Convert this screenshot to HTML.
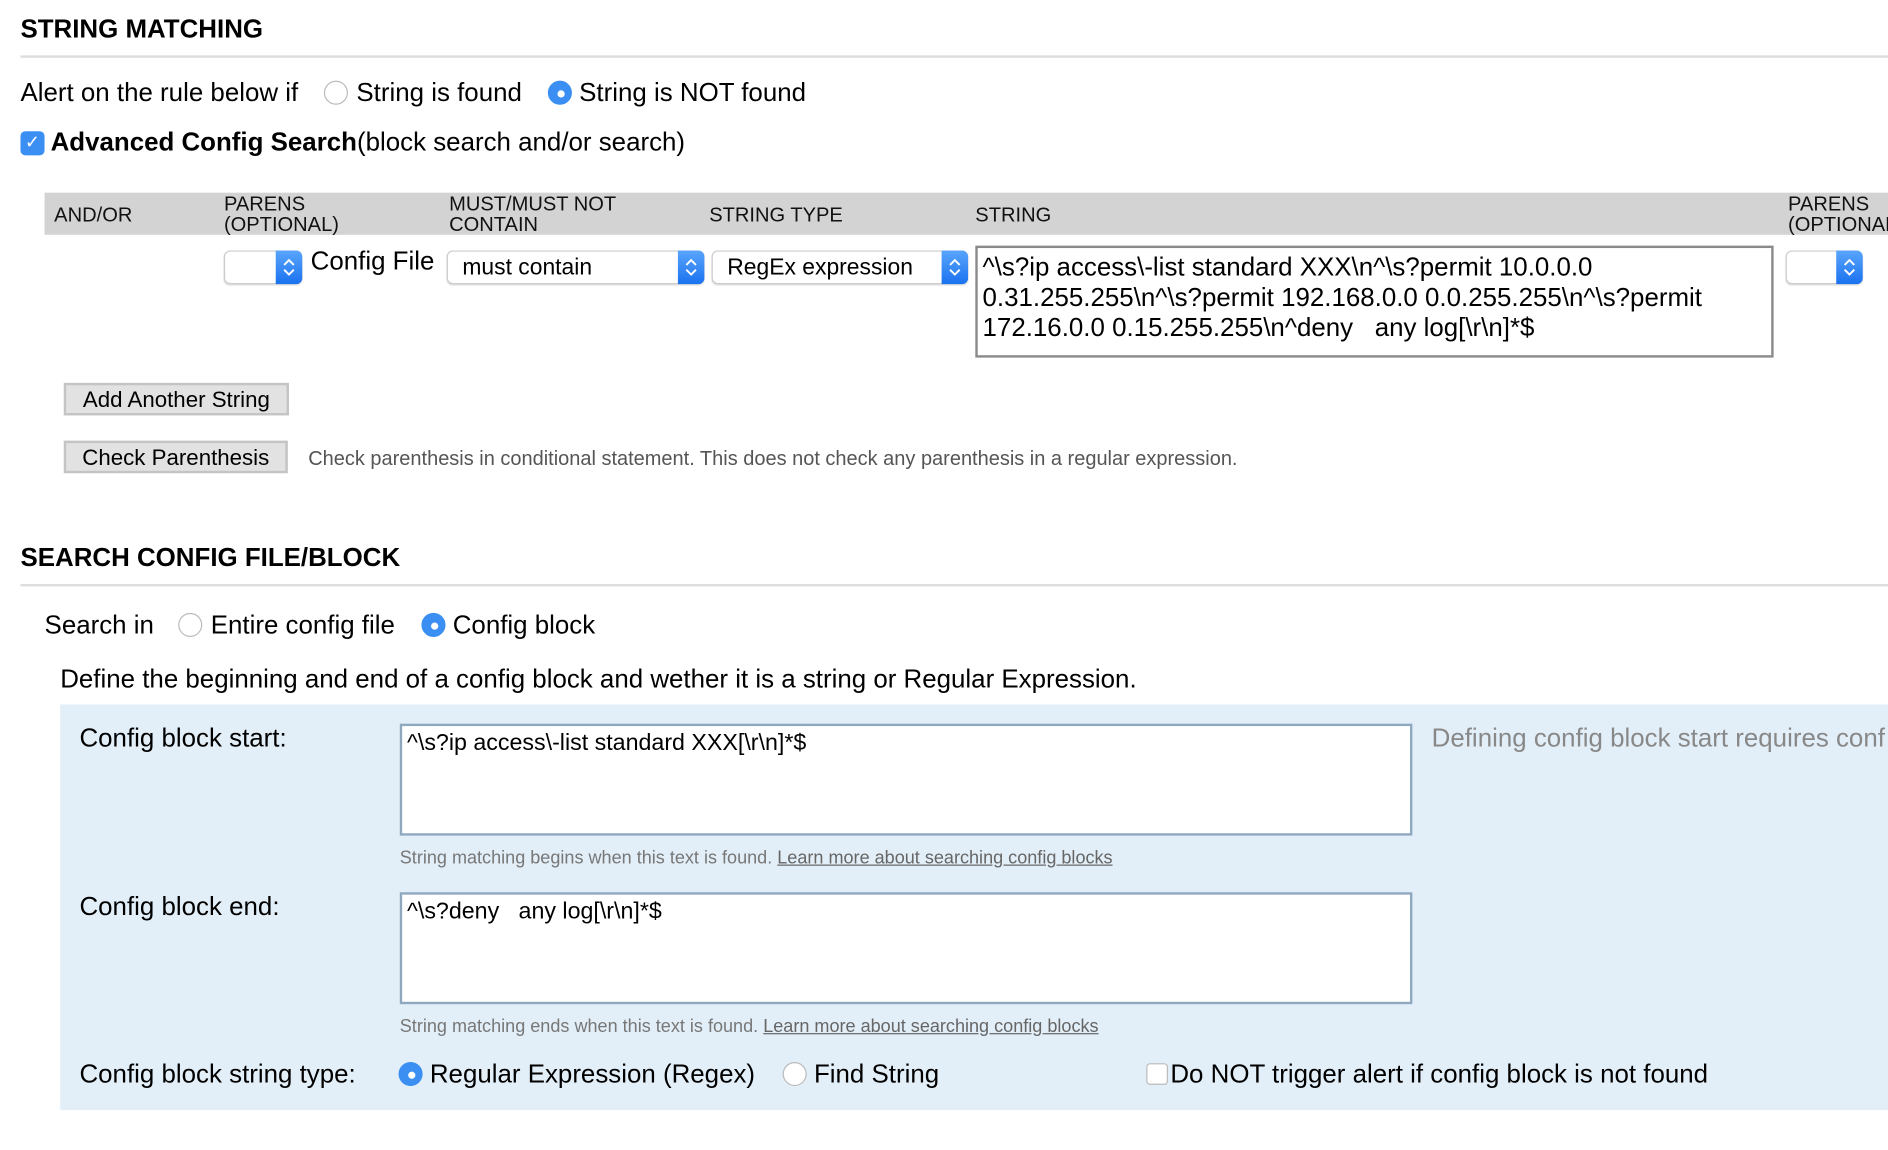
<!DOCTYPE html>
<html><head><meta charset="utf-8"><style>
html,body{margin:0;padding:0;background:#fff;overflow:hidden;width:1888px;height:1150px}
#w{position:absolute;left:0;top:0;width:1568px;height:955px;transform:scale(1.20408);transform-origin:0 0;font-family:"Liberation Sans",Arial,sans-serif;color:#000}
.a{position:absolute;white-space:nowrap}
.h{font-weight:bold;font-size:21.5px}
.t{font-size:21.5px}
.hr{position:absolute;height:2px;background:#ddd;right:0}
.rad{position:absolute;width:20px;height:20px;border-radius:50%;border:1px solid #bbb;background:#fff;box-sizing:border-box}
.rad.on{background:#3b8ff2;border-color:#3b8ff2}
.rad.on:after{content:"";position:absolute;left:7px;top:7px;width:6px;height:6px;border-radius:50%;background:#fff}
.th{font-size:16.7px;line-height:17px;color:#111}
.sel{position:absolute;height:28px;border:1px solid #ccc;border-radius:5px;background:#fff;box-sizing:border-box;font-size:19px;box-shadow:0 1px 1px #ddd}
.sel .st{position:absolute;right:-1px;top:-1px;bottom:-1px;width:22px;background:linear-gradient(#5aa5fb,#1a72f0);border-radius:0 5px 5px 0}
.sel .st svg{position:absolute;left:5px;top:5px}
.sel span{position:absolute;left:12px;top:3px}
.btn{position:absolute;background:#e2e2e2;border:2px solid #c4c4c4;box-sizing:border-box;font-size:18.5px;text-align:center;line-height:23px}
.ta{position:absolute;background:#fff;box-sizing:border-box}
.help{font-size:15px;color:#777}
.help u{color:#666}
</style></head><body><div id="w">
<div class="a h" style="left:17px;top:12px">STRING MATCHING</div>
<div class="hr" style="left:17px;top:46px"></div>
<div class="a t" style="left:17px;top:65px">Alert on the rule below if</div>
<div class="rad" style="left:269px;top:67px"></div>
<div class="a t" style="left:296px;top:65px">String is found</div>
<div class="rad on" style="left:455px;top:67px"></div>
<div class="a t" style="left:481px;top:65px">String is NOT found</div>
<div class="a" style="left:17px;top:109px;width:20px;height:20px;border-radius:4px;background:#3b8ff2;color:#fff;font-size:15px;text-align:center;line-height:20px">✓</div>
<div class="a t" style="left:42px;top:106px"><b>Advanced Config Search</b>(block search and/or search)</div>

<div class="a" style="left:37px;top:160px;right:0;height:35px;background:#d3d3d3"></div>
<div class="a th" style="left:45px;top:170px">AND/OR</div>
<div class="a th" style="left:186px;top:161px">PARENS<br>(OPTIONAL)</div>
<div class="a th" style="left:373px;top:161px">MUST/MUST NOT<br>CONTAIN</div>
<div class="a th" style="left:589px;top:170px">STRING TYPE</div>
<div class="a th" style="left:810px;top:170px">STRING</div>
<div class="a th" style="left:1485px;top:161px">PARENS<br>(OPTIONAL)</div>

<div class="sel" style="left:186px;top:208px;width:65px"><div class="st"><svg width="12" height="18" viewBox="0 0 12 18"><path d="M2 7L6 3L10 7M2 11L6 15L10 11" fill="none" stroke="#fff" stroke-width="1.6"/></svg></div></div>
<div class="a t" style="left:258px;top:205px">Config File</div>
<div class="sel" style="left:371px;top:208px;width:214px"><span>must contain</span><div class="st"><svg width="12" height="18" viewBox="0 0 12 18"><path d="M2 7L6 3L10 7M2 11L6 15L10 11" fill="none" stroke="#fff" stroke-width="1.6"/></svg></div></div>
<div class="sel" style="left:591px;top:208px;width:213px"><span>RegEx expression</span><div class="st"><svg width="12" height="18" viewBox="0 0 12 18"><path d="M2 7L6 3L10 7M2 11L6 15L10 11" fill="none" stroke="#fff" stroke-width="1.6"/></svg></div></div>
<div class="ta" style="left:810px;top:204px;width:663px;height:93px;border:2px solid #8a8a8a;padding:4px 4px;font-size:21.5px;line-height:25px;white-space:pre">^\s?ip access\-list standard XXX\n^\s?permit 10.0.0.0
0.31.255.255\n^\s?permit 192.168.0.0 0.0.255.255\n^\s?permit
172.16.0.0 0.15.255.255\n^deny   any log[\r\n]*$</div>
<div class="sel" style="left:1483px;top:208px;width:64px"><div class="st"><svg width="12" height="18" viewBox="0 0 12 18"><path d="M2 7L6 3L10 7M2 11L6 15L10 11" fill="none" stroke="#fff" stroke-width="1.6"/></svg></div></div>

<div class="btn" style="left:53px;top:318px;width:187px;height:27px">Add Another String</div>
<div class="btn" style="left:53px;top:366px;width:186px;height:27px">Check Parenthesis</div>
<div class="a" style="left:256px;top:371px;font-size:16.6px;color:#555">Check parenthesis in conditional statement. This does not check any parenthesis in a regular expression.</div>

<div class="a h" style="left:17px;top:451px">SEARCH CONFIG FILE/BLOCK</div>
<div class="hr" style="left:17px;top:485px"></div>
<div class="a t" style="left:37px;top:507px">Search in</div>
<div class="rad" style="left:148px;top:509px"></div>
<div class="a t" style="left:175px;top:507px">Entire config file</div>
<div class="rad on" style="left:350px;top:509px"></div>
<div class="a t" style="left:376px;top:507px">Config block</div>
<div class="a t" style="left:50px;top:552px">Define the beginning and end of a config block and wether it is a string or Regular Expression.</div>

<div class="a" style="left:50px;top:585px;right:0;height:337px;background:#e3eff8"></div>
<div class="a t" style="left:66px;top:601px">Config block start:</div>
<div class="ta" style="left:332px;top:601px;width:841px;height:93px;border:2px solid #8ea8c0;padding:4px 4px;font-size:19.3px">^\s?ip access\-list standard XXX[\r\n]*$</div>
<div class="a t" style="left:1189px;top:601px;color:#888">Defining config block start requires conf</div>
<div class="a help" style="left:332px;top:704px">String matching begins when this text is found. <u>Learn more about searching config blocks</u></div>
<div class="a t" style="left:66px;top:741px">Config block end:</div>
<div class="ta" style="left:332px;top:741px;width:841px;height:93px;border:2px solid #8ea8c0;padding:4px 4px;font-size:19.3px;white-space:pre">^\s?deny   any log[\r\n]*$</div>
<div class="a help" style="left:332px;top:844px">String matching ends when this text is found. <u>Learn more about searching config blocks</u></div>
<div class="a t" style="left:66px;top:880px">Config block string type:</div>
<div class="rad on" style="left:331px;top:882px"></div>
<div class="a t" style="left:357px;top:880px">Regular Expression (Regex)</div>
<div class="rad" style="left:650px;top:882px"></div>
<div class="a t" style="left:676px;top:880px">Find String</div>
<div class="a" style="left:952px;top:883px;width:18px;height:18px;border:1px solid #bbb;border-radius:3px;background:#fff;box-sizing:border-box"></div>
<div class="a t" style="left:972px;top:880px">Do NOT trigger alert if config block is not found</div>
</div></body></html>
